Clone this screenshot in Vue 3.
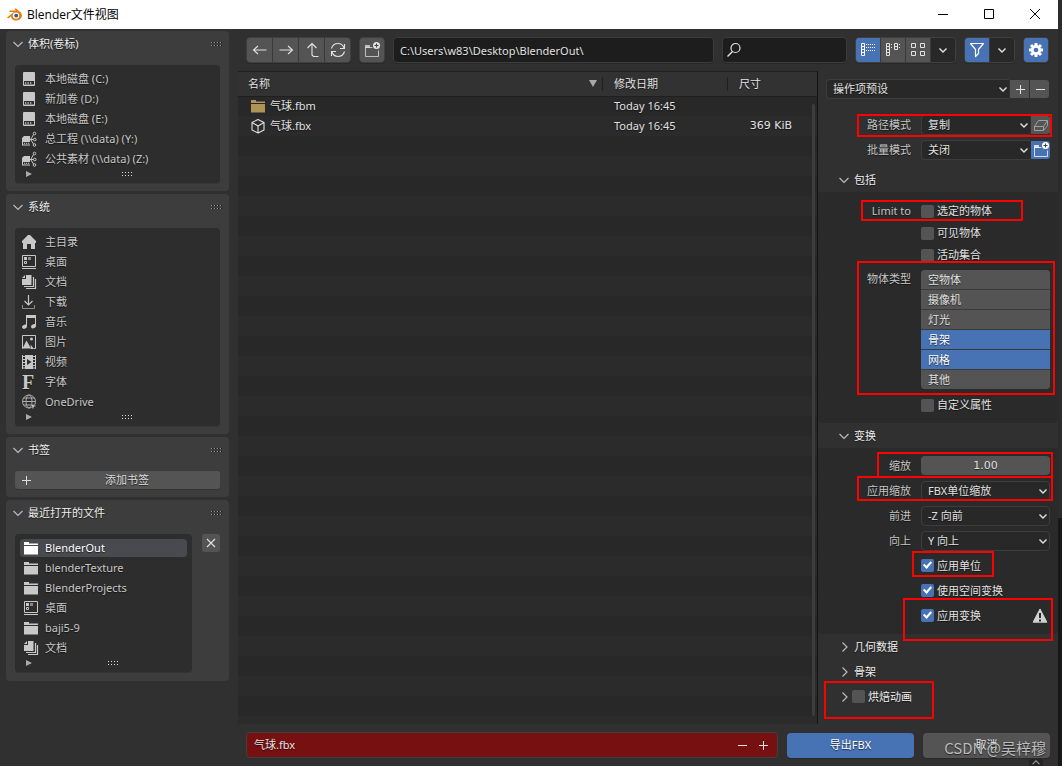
<script setup>
import { ref } from 'vue'

const icons = {
  disk: '<rect x="2" y="1" width="12" height="14" rx="1" fill="currentColor"/><path d="M3 10h10v3.5H3z" fill="#2d2d2d"/><path d="M4 12h1.3M6.5 12h1.3M9 12h1.3" stroke="currentColor" stroke-width="1.4"/>',
  net: '<path d="M3 5h6v9.500H1V7z" fill="currentColor"/><path d="M2 11h7v2.500H2z" fill="#2d2d2d"/><path d="M3 12.300h1.200M5 12.300h1.200M7 12.300h1.200" stroke="currentColor"/><g fill="none" stroke="currentColor"><path d="M9 8.500h3.500M10 8l2.500-4.500M10 9l2.500 4"/><circle cx="13.500" cy="2.500" r="1.300"/><circle cx="13.800" cy="8.500" r="1.300"/><circle cx="13.500" cy="14" r="1.300"/></g>',
  home: '<path d="M7 1h2l6 6v2h-1v6h-4v-5H6v5H2V9H1V7z" fill="currentColor"/>',
  desktop: '<path d="M1.500 1.500h13v11h-13zM1 14.500h14" fill="none" stroke="currentColor"/><path d="M3 3h3v3H3z" fill="currentColor"/><path d="M7 3h3v3H7z" fill="#888"/><path d="M3.500 7.500h2v2h-2z" fill="none" stroke="currentColor"/>',
  docs: '<path d="M5 1h5.500v10H1V5h4z" fill="currentColor"/><path d="M4 1v3H1z" fill="currentColor"/><path d="M12.500 3v9.500H3M14.500 5v9.500H5" fill="none" stroke="currentColor" stroke-width="1.200"/>',
  download: '<path d="M7.500 1v10M3.500 7l4 4 4-4" fill="none" stroke="currentColor" stroke-width="1.200"/><path d="M1.500 11v3.500h12V11" fill="none" stroke="#8b8b8b"/>',
  music: '<path d="M5.500 12V2h9v10" fill="none" stroke="currentColor"/><path d="M5 1h10v3H5z" fill="currentColor"/><ellipse cx="3.500" cy="12.700" rx="2.600" ry="2" transform="rotate(-25 3.500 12.700)" fill="currentColor"/><ellipse cx="12.500" cy="12.300" rx="2.600" ry="2" transform="rotate(-25 12.500 12.300)" fill="currentColor"/>',
  image: '<path d="M2 14.500h-.5v-13h13v13H13" fill="none" stroke="currentColor"/><path d="M5.500 6.500L10 14.500H1.500zM9.500 10.500l3.500 4.500h-3z" fill="currentColor"/><circle cx="10.500" cy="5" r="1.500" fill="currentColor"/>',
  film: '<path d="M4 1h8v14H4z" fill="currentColor"/><path d="M6 5v6l4.500-3z" fill="#2d2d2d"/><path d="M1.500 1v14M14.500 1v14M1 2.500h3M1 5.500h3M1 8.500h3M1 11.500h3M1 14h3M12 2.500h3M12 5.500h3M12 8.500h3M12 11.500h3M12 14h3" stroke="currentColor"/>',
  font: '<text x="1" y="15" font-family="Liberation Serif, serif" font-weight="700" font-size="20" fill="currentColor">F</text>',
  globe: '<g fill="none" stroke="#aaa"><circle cx="8" cy="7.500" r="6.500"/><ellipse cx="8" cy="7.500" rx="3" ry="6.500"/><path d="M1.500 7.500h13M2.500 4h11M2.500 11h8"/></g><path d="M9.500 9.500l6 2.500-2.500.8-1 2.700z" fill="currentColor" stroke="#2d2d2d" stroke-width=".4"/>',
  folder: '<path d="M1 2h5v1.500h9V5H1zM1 6h14v8.500H1z" fill="currentColor"/>',
  cube: '<path d="M8 1.500l6 3v7.500l-6 3-6-3V4.500zM2 4.500l6 3.500 6-3.500M8 8v7" fill="none" stroke="currentColor" stroke-width="1.100" stroke-linejoin="round"/>',
  left: '<path d="M14.500 8h-13M6 4L1.500 8 6 12" fill="none" stroke="currentColor" stroke-width="1.100"/>',
  right: '<path d="M1.500 8h13M10 4l4.500 4-4.500 4" fill="none" stroke="currentColor" stroke-width="1.100"/>',
  up: '<path d="M14.500 14.500h-5l-1.500-1.500V1.500M3.500 6L8 1.500 12.500 6" fill="none" stroke="currentColor" stroke-width="1.100"/>',
  refresh: '<path d="M1.500 6.500C2.500 3 5 1.500 8 1.500c3 0 5 1.500 6 4.500M14.500 2v4.500H10M14.500 9.500c-1 3.500-3.500 5-6.500 5-3 0-5-1.500-6-4.500M1.500 14V9.500H6" fill="none" stroke="currentColor" stroke-width="1.100"/>',
  newfolder: '<path d="M8.500 5.500h-7v9h13v-6" fill="none" stroke="currentColor" opacity=".75"/><path d="M1 3h5v3H1z" fill="currentColor" opacity=".75"/><circle cx="12.500" cy="3.500" r="3.500" fill="currentColor"/><path d="M12.500 1.500v4M10.500 3.500h4" stroke="#444" stroke-width="1.100"/>',
  search: '<circle cx="9.500" cy="6" r="4.500" fill="none" stroke="currentColor" stroke-width="1.200"/><path d="M6.500 9.500L1.500 14.500" stroke="currentColor" stroke-width="1.500"/>',
  listv: '<path d="M1.500 1.500h3v12h-3zM1.500 4.500h3M1.500 7.500h3M1.500 10.500h3" fill="none" stroke="currentColor"/><path d="M6 2.500h9M6 5.500h9M6 8.500h9" stroke="currentColor" stroke-dasharray="1 1"/>',
  listh: '<path d="M1.500 1.500h3v12h-3zM1.500 4.500h3M1.500 7.500h3M1.500 10.500h3M9.500 1.500h3v6h-3zM9.500 4.500h3" fill="none" stroke="currentColor"/><path d="M6.500 2v6M14.500 2v6" stroke="currentColor" stroke-dasharray="1 2"/>',
  grid: '<path d="M1.500 1.500h4v4h-4zM10.500 1.500h4v4h-4zM1.500 9.500h4v4h-4zM10.500 9.500h4v4h-4z" fill="none" stroke="currentColor"/>',
  down: '<path d="M4.500 6.500L8 10l3.500-3.500" fill="none" stroke="currentColor" stroke-width="1.400"/>',
  open: '<path d="M3.500 6L8 10.500 12.500 6" fill="none" stroke="currentColor" stroke-width="1.200"/>',
  closed: '<path d="M6.500 3.500L11 8 6.500 12.500" fill="none" stroke="currentColor" stroke-width="1.200"/>',
  funnel: '<path d="M1.500 1.500h13l-5 6v4l-3 3v-7z" fill="none" stroke="currentColor" stroke-width="1.200" stroke-linejoin="round"/>',
  gear: '<g stroke="currentColor" stroke-width="3"><path d="M8 1v14M1 8h14M3 3l10 10M13 3L3 13"/></g><circle cx="8" cy="8" r="5" fill="currentColor"/><circle cx="8" cy="8" r="2.300" fill="#4772b3"/>',
  plus: '<path d="M8.500 4v9M4 8.500h9" stroke="currentColor"/>',
  minus: '<path d="M4 8.500h9" stroke="currentColor"/>',
  close: '<path d="M4 4l8 8M12 4l-8 8" stroke="currentColor" stroke-width="1.100"/>',
  box: '<path d="M1.500 9.500l4-6h9v5l-4 5h-9zM1.500 9.500h9l4-6M10.500 9.500v4" fill="none" stroke="#a0a0a0" stroke-linejoin="round"/>',
  warn: '<path d="M8 1.500L14.500 14h-13z" fill="currentColor" stroke="currentColor" stroke-width="1.500" stroke-linejoin="round"/><path d="M8 5v5M8 11.500v2" stroke="#2a2a2a" stroke-width="2"/>',
  blender: '<path d="M1 10.500L8 5H3.500V3.600H10L8.500 2l1.200-.8 5 4.300c2 2 1.500 5.500-1 7-2.500 1.700-6.500 1.300-8-1-.5-.8-.7-1.500-.6-2.300L2.200 11.600z" fill="#e87d0d"/><circle cx="10" cy="8.600" r="3.200" fill="#fff"/><circle cx="10.200" cy="8.600" r="1.900" fill="#235a9c"/>'
}

const volumes = [
  ['disk', '本地磁盘 (C:)'], ['disk', '新加卷 (D:)'], ['disk', '本地磁盘 (E:)'],
  ['net', '总工程 (\\\\data) (Y:)'], ['net', '公共素材 (\\\\data) (Z:)']
]
const system = [
  ['home', '主目录'], ['desktop', '桌面'], ['docs', '文档'], ['download', '下载'], ['music', '音乐'],
  ['image', '图片'], ['film', '视频'], ['font', '字体'], ['globe', 'OneDrive']
]
const places = [
  { title: '体积(卷标)', items: volumes },
  { title: '系统', items: system }
]
const recent = [
  ['folder', 'BlenderOut'], ['folder', 'blenderTexture'], ['folder', 'BlenderProjects'],
  ['desktop', '桌面'], ['folder', 'baji5-9'], ['docs', '文档']
]
const nav = [['left', '后退'], ['right', '前进'], ['up', '上级'], ['refresh', '刷新']]
const views = [['listv', '列表'], ['listh', '横向列表'], ['grid', '缩略图'], ['down', '显示设置']]
const files = [
  { icon: 'folder', name: '气球.fbm', date: 'Today 16:45', size: '' },
  { icon: 'cube', name: '气球.fbx', date: 'Today 16:45', size: '369 KiB' }
]
const modes = [
  { id: 'path', label: '路径模式', value: '复制', icon: 'box' },
  { id: 'batch', label: '批量模式', value: '关闭', icon: 'newfolder' }
]
const limits = ['选定的物体', '可见物体', '活动集合']
const types = ref([
  { name: '空物体', on: false }, { name: '摄像机', on: false }, { name: '灯光', on: false },
  { name: '骨架', on: true }, { name: '网格', on: true }, { name: '其他', on: false }
])
const axes = [
  { id: 'units', label: '应用缩放', value: 'FBX单位缩放' },
  { id: 'forward', label: '前进', value: '-Z 向前' },
  { id: 'upward', label: '向上', value: 'Y 向上' }
]
const applies = ['应用单位', '使用空间变换', '应用变换']
const marks = ['path', 'limit', 'types', 'scale', 'units', 'unit', 'transform', 'bake']
const path = ref('C:\\Users\\w83\\Desktop\\BlenderOut\\')
const query = ref('')
const filename = ref('气球.fbx')
const scale = ref('1.00')
</script>

<template>
  <div class="desktop">
    <div class="window">
      <header class="titlebar">
        <svg class="ic" viewBox="0 0 16 16" v-html="icons.blender" />
        <h1>Blender文件视图</h1>
        <button aria-label="最小化"><svg viewBox="0 0 12 12"><path d="M1 6.500h10" stroke="#000" /></svg></button>
        <button aria-label="最大化"><svg viewBox="0 0 12 12"><path d="M1.500 1.500h9v9h-9z" fill="none" stroke="#000" /></svg></button>
        <button aria-label="关闭"><svg viewBox="0 0 12 12"><path d="M1 1l10 10M11 1L1 11" stroke="#000" /></svg></button>
      </header>

      <div class="body">
        <aside class="sidebar">
          <section v-for="p in places" :key="p.title" class="panel">
            <h2><svg class="ic" viewBox="0 0 16 16" v-html="icons.open" />{{ p.title }}<i class="grip dark"></i></h2>
            <div class="list">
              <ul>
                <li v-for="it in p.items" :key="it[1]"><svg class="ic" viewBox="0 0 16 16" v-html="icons[it[0]]" />{{ it[1] }}</li>
              </ul>
              <div class="more"><i class="tri"></i><i class="grip"></i></div>
            </div>
          </section>
          <section class="panel">
            <h2><svg class="ic" viewBox="0 0 16 16" v-html="icons.open" />书签<i class="grip dark"></i></h2>
            <button class="add"><svg class="ic" viewBox="0 0 16 16" v-html="icons.plus" /><span>添加书签</span></button>
          </section>
          <section class="panel">
            <h2><svg class="ic" viewBox="0 0 16 16" v-html="icons.open" />最近打开的文件<i class="grip dark"></i></h2>
            <div class="recent">
              <div class="list">
                <ul>
                  <li v-for="(it, i) in recent" :key="it[1]" :class="{ on: i === 0 }"><svg class="ic" viewBox="0 0 16 16" v-html="icons[it[0]]" />{{ it[1] }}</li>
                </ul>
                <div class="more"><i class="tri"></i><i class="grip"></i></div>
              </div>
              <button class="clear" aria-label="清除"><svg class="ic" viewBox="0 0 16 16" v-html="icons.close" /></button>
            </div>
          </section>
        </aside>

        <main class="main">
          <div class="toolbar">
            <div class="group">
              <button v-for="n in nav" :key="n[0]" :aria-label="n[1]"><svg class="ic" viewBox="0 0 16 16" v-html="icons[n[0]]" /></button>
            </div>
            <div class="group"><button aria-label="新建文件夹"><svg class="ic" viewBox="0 0 16 16" v-html="icons.newfolder" /></button></div>
            <input v-model="path" class="field path" aria-label="路径">
            <label class="field search"><svg class="ic" viewBox="0 0 16 16" v-html="icons.search" /><input v-model="query" aria-label="搜索"></label>
            <div class="group">
              <button v-for="(v, i) in views" :key="v[0]" :aria-label="v[1]" :class="{ blue: i === 0, flat: i === 3 }"><svg class="ic" viewBox="0 0 16 16" v-html="icons[v[0]]" /></button>
            </div>
            <div class="group">
              <button class="blue" aria-label="过滤"><svg class="ic" viewBox="0 0 16 16" v-html="icons.funnel" /></button>
              <button class="flat" aria-label="过滤设置"><svg class="ic" viewBox="0 0 16 16" v-html="icons.down" /></button>
            </div>
            <div class="group"><button class="blue" aria-label="选项"><svg class="ic" viewBox="0 0 16 16" v-html="icons.gear" /></button></div>
          </div>

          <div class="middle">
            <div class="files">
              <table>
                <colgroup><col><col class="c-date"><col class="c-size"></colgroup>
                <thead><tr><th><span>名称</span><i class="sort"></i></th><th>修改日期</th><th>尺寸</th></tr></thead>
                <tbody>
                  <tr v-for="f in files" :key="f.name">
                    <td><span class="name"><svg class="ic" :class="f.icon" viewBox="0 0 16 16" v-html="icons[f.icon]" />{{ f.name }}</span></td>
                    <td>{{ f.date }}</td>
                    <td class="figure size">{{ f.size }}</td>
                  </tr>
                </tbody>
              </table>
              <div class="empty"></div>
              <div class="scroll"></div>
            </div>

            <form class="options" @submit.prevent>
              <div class="presets">
                <span class="pick"><select aria-label="操作项预设"><option>操作项预设</option></select><svg class="ic" viewBox="0 0 16 16" v-html="icons.down" /></span>
                <button aria-label="添加预设"><svg class="ic" viewBox="0 0 16 16" v-html="icons.plus" /></button>
                <button aria-label="删除预设"><svg class="ic" viewBox="0 0 16 16" v-html="icons.minus" /></button>
              </div>
              <div v-for="(m, i) in modes" :key="m.id" class="row">
                <label :for="m.id">{{ m.label }}</label>
                <div class="ctl joined">
                  <span class="pick"><select :id="m.id"><option>{{ m.value }}</option></select><svg class="ic" viewBox="0 0 16 16" v-html="icons.down" /></span>
                  <button :class="{ blue: i === 1 }" :aria-label="m.label"><svg class="ic" viewBox="0 0 16 16" v-html="icons[m.icon]" /></button>
                </div>
              </div>

              <h3 class="first"><svg class="ic" viewBox="0 0 16 16" v-html="icons.open" />包括</h3>
              <div class="sub include">
                <div v-for="(l, i) in limits" :key="l" class="row check">
                  <span class="lab">{{ i === 0 ? 'Limit to' : '' }}</span>
                  <label class="tick"><input type="checkbox">{{ l }}</label>
                </div>
                <div class="row types">
                  <span class="lab">物体类型</span>
                  <div class="stack">
                    <button v-for="t in types" :key="t.name" type="button" :class="{ blue: t.on }" :aria-pressed="t.on" @click="t.on = !t.on">{{ t.name }}</button>
                  </div>
                </div>
                <div class="row check"><span class="lab"></span><label class="tick"><input type="checkbox">自定义属性</label></div>
              </div>

              <h3><svg class="ic" viewBox="0 0 16 16" v-html="icons.open" />变换</h3>
              <div class="sub transform">
                <div class="row"><label for="scale">缩放</label><input id="scale" v-model="scale" class="number figure"></div>
                <div v-for="a in axes" :key="a.id" class="row">
                  <label :for="a.id">{{ a.label }}</label>
                  <span class="pick"><select :id="a.id"><option>{{ a.value }}</option></select><svg class="ic" viewBox="0 0 16 16" v-html="icons.down" /></span>
                </div>
                <div v-for="(a, i) in applies" :key="a" class="row">
                  <span class="lab"></span>
                  <div class="ctl"><label class="tick"><input type="checkbox" checked>{{ a }}</label><svg v-if="i === 2" class="ic warn" viewBox="0 0 16 16" v-html="icons.warn" /></div>
                </div>
              </div>
              <h3><svg class="ic" viewBox="0 0 16 16" v-html="icons.closed" />几何数据</h3>
              <h3><svg class="ic" viewBox="0 0 16 16" v-html="icons.closed" />骨架</h3>
              <h3><svg class="ic" viewBox="0 0 16 16" v-html="icons.closed" /><label class="tick bake"><input type="checkbox">烘焙动画</label></h3>
              <i v-for="m in marks" :key="m" class="mark" :class="'mark-' + m"></i>
            </form>
          </div>

          <footer class="footer">
            <div class="filename">
              <input v-model="filename" aria-label="文件名">
              <button aria-label="减少"><svg class="ic" viewBox="0 0 16 16" v-html="icons.minus" /></button>
              <button aria-label="增加"><svg class="ic" viewBox="0 0 16 16" v-html="icons.plus" /></button>
            </div>
            <button class="act blue">导出FBX</button>
            <button class="act">取消</button>
            <span class="watermark">CSDN @吴梓穆</span>
            <span class="tab"><svg viewBox="0 0 16 8"><path d="M4 6l4-4 4 4" fill="none" stroke="#aaa" stroke-width="1.200" /></svg></span>
          </footer>
        </main>
      </div>
    </div>
  </div>
</template>

<style>
body { background: #222; }
</style>

<style scoped>
* { box-sizing: border-box; }
.desktop {
  display: flex;
  min-height: 100vh;
  padding-right: 4px;
  background: linear-gradient(#2c2c2c 518px, #181818 518px);
  font: 11px/16px "Noto Sans", "Noto Sans CJK SC", sans-serif;
  color: #e2e2e2;
}
.window { flex: 1; min-width: 0; display: flex; flex-direction: column; background: #303030; }
button, input, select { font: inherit; color: inherit; margin: 0; padding: 0; border: 0; border-radius: 0; min-width: 0; text-shadow: inherit; }
button { background: #545454; display: flex; align-items: center; justify-content: center; }
input:focus { outline: none; }
.blue { background: #4772b3; color: #fff; }
.ic { width: 16px; height: 16px; flex: none; display: block; overflow: visible; }
.figure { font-family: "DejaVu Sans", sans-serif; }
h1, h2, h3, ul { margin: 0; padding: 0; font: inherit; list-style: none; }

.titlebar { height: 29px; background: #fff; color: #000; display: flex; align-items: center; padding-left: 6px; }
.titlebar h1 { flex: 1; margin-left: 5px; font: 12px/16px "Open Sans", "Noto Sans CJK SC", sans-serif; }
.titlebar button { width: 46px; height: 29px; padding-bottom: 2px; background: none; }
.titlebar button svg { width: 12px; height: 12px; }

.body { flex: 1; display: flex; text-shadow: 0 1px 1px rgba(0, 0, 0, 0.6); }
.sidebar { width: 238px; flex: none; padding: 2px 9px 0 6px; display: flex; flex-direction: column; gap: 3px; }
.panel { background: #3d3d3d; border-radius: 4px; padding: 0 9px 8px; }
.panel h2 { display: flex; align-items: center; height: 26px; margin-bottom: 8px; margin-left: -5px; gap: 2px; color: #eee; }
.panel h2 .ic { color: #bbb; }
.grip {
  width: 12px;
  height: 5px;
  background: repeating-linear-gradient(90deg, #ddd 0 1px, transparent 1px 3px);
  mask: repeating-linear-gradient(#000 0 1px, transparent 1px 3px);
}
.grip.dark { margin-left: auto; margin-right: -3px; background: repeating-linear-gradient(90deg, #999 0 1px, #181818 1px 2px, transparent 2px 3px); }
.list { background: #2d2d2d; border-radius: 4px; padding-top: 4px; color: #c8c8c8; box-shadow: 0 1px 0 #353535; }
.list li { height: 20px; display: flex; align-items: center; gap: 8px; padding-left: 6px; white-space: nowrap; }
.more { height: 14px; display: flex; justify-content: center; padding: 3px 0 0 20px; position: relative; }
.tri { position: absolute; left: 11px; top: 2px; border-left: 6px solid #aaa; border-top: 3px solid transparent; border-bottom: 3px solid transparent; }
.add { width: 100%; height: 18px; border-radius: 3px; justify-content: flex-start; padding-left: 3px; color: #ddd; box-shadow: 0 1px 0 #333; }
.add span { flex: 1; text-align: center; }
.recent { display: flex; gap: 10px; align-items: flex-start; padding-bottom: 1px; }
.recent .list { flex: 1; }
.recent li { margin: 0 5px; padding-left: 3px; gap: 6px; border: solid #2d2d2d; border-width: 1px 0; border-radius: 4px; }
.recent li.on { background: #484a50; color: #fff; }
.clear { width: 18px; height: 18px; border-radius: 3px; }

.main { flex: 1; min-width: 0; display: flex; flex-direction: column; }
.toolbar { height: 42px; display: flex; align-items: center; gap: 8px; padding: 0 9px 0 8px; }
.group { display: flex; gap: 1px; border: 1px solid #3f3f3f; border-radius: 4px; overflow: hidden; background: #3a3a3a; box-shadow: 0 1px 0 #292929; }
.group button { width: 24px; height: 24px; }
.group button.flat { background: #282828; }
.group:first-child button { width: 25px; }
.field { height: 26px; background: #1d1d1d; border: 1px solid #3b3b3b; border-radius: 4px; box-shadow: 0 1px 0 #292929; }
.path { flex: 1; padding: 0 6px; }
.search { width: 125px; display: flex; align-items: center; padding-left: 3px; }
.search input { flex: 1; background: none; }

.middle { flex: 1; display: flex; }
.files { flex: 1; min-width: 0; position: relative; display: flex; flex-direction: column; border-top: 1px solid #1f1f1f; border-right: 1px solid #141414; }
table { width: 100%; border-collapse: collapse; table-layout: fixed; }
.c-date { width: 125px; }
.c-size { width: 90px; }
th { height: 24px; padding: 0 12px; font-weight: 400; text-align: left; border-bottom: 1px solid #1f1f1f; background: #323232; position: relative; }
th:first-child { padding-left: 10px; }
th + th::before { content: ""; position: absolute; left: 0; top: 5px; height: 14px; width: 1px; background: #1f1f1f; }
th .sort { float: right; margin: 4px -7px 0 0; border-top: 7px solid #aaa; border-left: 4px solid transparent; border-right: 4px solid transparent; }
td { height: 20px; padding: 0 12px; }
td.size { text-align: right; padding-right: 25px; }
tbody tr { background: #282828; }
tbody tr:nth-child(even) { background: #2b2b2b; }
.name { display: flex; align-items: center; gap: 4px; }
.name .folder { color: #ae9456; }
.empty { flex: 1; background: repeating-linear-gradient(#282828 0 20px, #2b2b2b 20px 40px); }
.scroll { position: absolute; right: 2px; top: 32px; bottom: 8px; width: 3px; border-radius: 2px; background: #3d3d3d; }

.options { width: 240px; flex: none; position: relative; padding-top: 8px; }
.presets { display: flex; gap: 1px; margin: 0 9px 13px 8px; height: 20px; }
.pick { position: relative; display: flex; flex: 1; height: 20px; min-width: 0; }
.pick select { flex: 1; width: 100%; appearance: none; background: #282828; border: 1px solid #3d3d3d; border-radius: 4px; padding: 0 6px; }
.pick .ic { position: absolute; right: -1px; top: 2px; pointer-events: none; }
.presets .pick .ic, .joined .pick .ic { right: -2px; }
.presets .pick select, .joined .pick select { border-radius: 4px 0 0 4px; border-right: 0; }
.presets button, .joined button { width: 19px; height: 18px; margin-top: 1px; }
.presets button:last-child, .joined button { border-radius: 0 3px 3px 0; }
.joined button { margin-top: 0; }
.row { display: grid; grid-template-columns: 93px 1fr; column-gap: 10px; height: 25px; align-items: center; padding-right: 8px; }
.row > label, .lab { text-align: right; color: #c6c6c6; }
.row > .tick { text-align: left; color: #e2e2e2; }
.ctl { display: flex; align-items: center; min-width: 0; }
.joined { gap: 1px; }
.options h3 { height: 25px; display: flex; align-items: center; padding-left: 18px; gap: 2px; color: #eee; }
.options h3 .ic { color: #bbb; }
.options h3.first { margin-top: 5px; }
.sub { background: #2a2a2a; border-radius: 0 0 4px 4px; }
.include { padding: 8px 0 7px; }
.transform { padding: 5px 0 6px; }
.row.check { height: 22px; }
.tick { display: flex; align-items: center; gap: 3px; }
.tick input { appearance: none; width: 13px; height: 13px; background: #545454; border-radius: 2px; position: relative; }
.tick input:checked { background: #4772b3; }
.tick input:checked::after { content: ""; position: absolute; left: 4px; top: 1px; width: 3px; height: 6px; border: solid #fff; border-width: 0 2px 2px 0; transform: rotate(42deg); }
.bake { margin-left: -2px; }
.row.types { height: auto; align-items: start; margin: 4px 0 5px; }
.types .lab { line-height: 18px; }
.stack { display: flex; flex-direction: column; gap: 1px; border-radius: 4px; overflow: hidden; background: #3a3a3a; }
.stack button { height: 19px; padding-left: 7px; justify-content: flex-start; }
.number { height: 19px; width: 100%; background: #545454; border-radius: 4px; text-align: center; }
.warn { margin-left: auto; margin-right: 2px; color: #d0d0d0; }

/* Highlight frames drawn over the export options */
.mark { position: absolute; border: 2px solid #f00; pointer-events: none; }
.mark-path { right: 6px; top: 43px; width: 195px; height: 23px; }
.mark-limit { right: 35px; top: 129px; width: 162px; height: 21px; }
.mark-types { right: 3px; top: 190px; width: 198px; height: 134px; }
.mark-scale { right: 5px; top: 381px; width: 176px; height: 26px; }
.mark-units { right: 5px; top: 405px; width: 196px; height: 25px; }
.mark-unit { right: 64px; top: 480px; width: 82px; height: 26px; }
.mark-transform { right: 5px; top: 527px; width: 150px; height: 43px; }
.mark-bake { right: 124px; top: 610px; width: 110px; height: 38px; }

.footer { height: 42px; display: flex; align-items: center; gap: 9px; padding: 0 8px; position: relative; }
.filename { flex: 1; height: 26px; display: flex; align-items: center; background: #771111; border: 1px solid #3f3f3f; border-radius: 4px; padding: 0 6px 0 7px; }
.filename input { flex: 1; background: none; }
.filename button { background: none; width: 16px; margin-left: 5px; }
.act { width: 127px; height: 25px; border-radius: 4px; box-shadow: 0 1px 0 #292929; }
.watermark { position: absolute; right: 12px; top: 14px; font: 15px/20px "Noto Sans CJK SC", sans-serif; color: #bbb; }
.tab { position: absolute; right: 15px; bottom: 0; width: 14px; height: 7px; background: #242424; border-radius: 3px 3px 0 0; }
.tab svg { display: block; width: 14px; height: 7px; }
</style>
